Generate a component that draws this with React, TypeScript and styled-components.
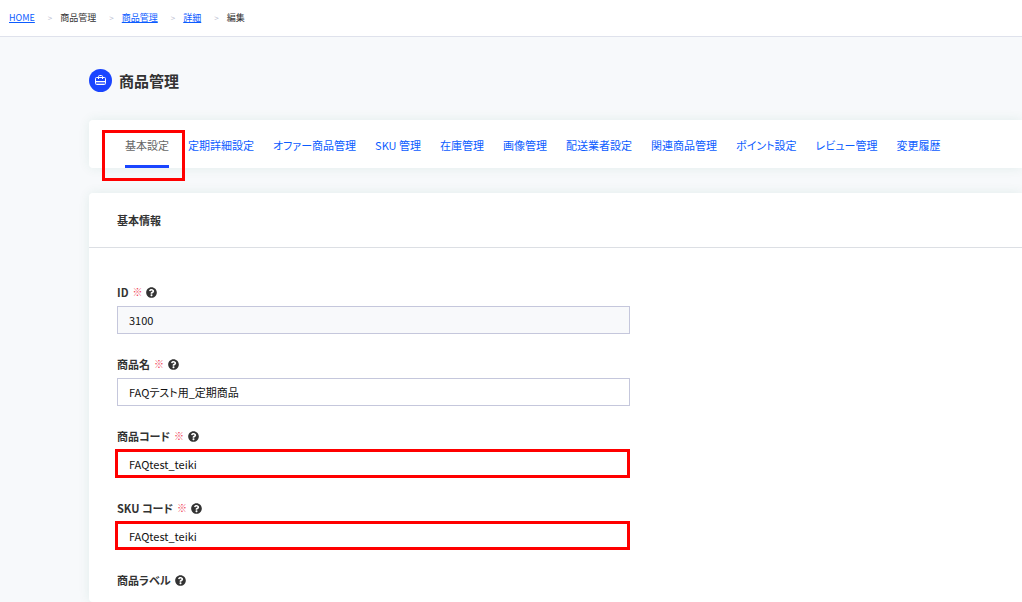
import React from "react";
import styled, { createGlobalStyle, css } from "styled-components";
import { FaQuestionCircle } from "react-icons/fa";

const GlobalStyle = createGlobalStyle`
  *, *::before, *::after { box-sizing: border-box; }
  html, body { margin: 0; padding: 0; }
  body {
    background: #f7f9fb;
    color: #333;
    font-family: "Noto Sans CJK JP", sans-serif;
    font-feature-settings: "palt";
    font-size: 11px;
    line-height: 16px;
    overflow-x: hidden;
  }
`;

const Page = styled.div`
  display: flex;
  flex-direction: column;
  min-height: 100vh;
`;

const Breadcrumb = styled.nav`
  background: #fff;
  border-bottom: 1px solid #dfe2ec;
  padding: 10px 9px;
`;

const Crumbs = styled.ol`
  display: flex;
  margin: 0;
  padding: 0;
  list-style: none;
  font-size: 9px;
  line-height: 16px;
`;

const Crumb = styled.li`
  & + &::before {
    content: ">";
    margin: 0 8px 0 13px;
    color: #b9bdd0;
    font-size: 8px;
  }
`;

const CrumbLink = styled.a`
  color: #0b5cff;
  text-decoration: underline;
`;

const Main = styled.main`
  display: flex;
  flex: 1;
  flex-direction: column;
  padding: 31px 0 0 89px;
`;

const Heading = styled.header`
  display: flex;
  align-items: center;
  gap: 7px;
  height: 24px;
  margin-bottom: 28px;
`;

const HeadingIcon = styled.span`
  display: flex;
  align-items: center;
  justify-content: center;
  width: 23px;
  height: 23px;
  border-radius: 50%;
  background: #1a45ff;
`;

const Title = styled.h1`
  margin: 0;
  padding-top: 2px;
  font-size: 15px;
  line-height: 24px;
  font-weight: 700;
`;

const card = css`
  background: #fff;
  border-radius: 4px 0 0 4px;
  box-shadow: 0 0 12px rgba(0, 110, 80, 0.09);
`;

const Tabs = styled.nav`
  ${card}
  display: flex;
  gap: 19px;
  height: 48px;
  margin-bottom: 25px;
  padding-left: 36px;
  white-space: nowrap;
`;

const Tab = styled.a<{ $active?: boolean }>`
  position: relative;
  padding-top: 17px;
  color: ${(p) => (p.$active ? "#666" : "#0b5cff")};
  text-decoration: none;
  border-bottom: 3px solid ${(p) => (p.$active ? "#1a45ff" : "transparent")};
`;

const Marker = styled.span<{ $inset: string }>`
  position: absolute;
  inset: ${(p) => p.$inset};
  border: 3px solid #f00;
  pointer-events: none;
`;

const Panel = styled.section`
  ${card}
  flex: 1;
`;

const PanelTitle = styled.h2`
  margin: 0;
  padding: 19px 28px;
  border-bottom: 1px solid #dcdfe4;
  font-size: 11px;
  line-height: 16px;
  font-weight: 700;
`;

const Form = styled.form`
  display: flex;
  flex-direction: column;
  gap: 22px;
  max-width: 569px;
  padding: 36px 28px 13px;
`;

const Field = styled.div`
  display: flex;
  flex-direction: column;
  gap: 6px;
`;

const LabelRow = styled.div`
  display: flex;
  align-items: center;
  gap: 4px;
  height: 16px;
`;

const Label = styled.label`
  font-weight: 700;
`;

const Required = styled.span`
  color: #f0465a;
  font-size: 10px;
`;

const HelpButton = styled.button`
  display: flex;
  padding: 0;
  border: 0;
  background: none;
  color: #333;
  font-size: 11px;
`;

const InputWrap = styled.div`
  position: relative;
  display: flex;
`;

const Input = styled.input`
  width: 100%;
  height: 28px;
  padding: 0 11px;
  border: 1px solid #c5c7dc;
  border-radius: 0;
  background: #fff;
  color: #111;
  font: inherit;
  font-feature-settings: inherit;
  outline: none;

  &:read-only {
    background: #f8f9fb;
  }
`;

const crumbs = [
  { text: "HOME", link: true },
  { text: "商品管理" },
  { text: "商品管理", link: true },
  { text: "詳細", link: true },
  { text: "編集" },
];

const tabs = [
  "基本設定",
  "定期詳細設定",
  "オファー商品管理",
  "SKU 管理",
  "在庫管理",
  "画像管理",
  "配送業者設定",
  "関連商品管理",
  "ポイント設定",
  "レビュー管理",
  "変更履歴",
];

interface FieldData {
  id: string;
  label: string;
  value?: string;
  required?: boolean;
  readOnly?: boolean;
  marked?: boolean;
}

const fields: FieldData[] = [
  { id: "product-id", label: "ID", value: "3100", required: true, readOnly: true },
  { id: "product-name", label: "商品名", value: "FAQテスト用_定期商品", required: true },
  { id: "product-code", label: "商品コード", value: "FAQtest_teiki", required: true, marked: true },
  { id: "sku-code", label: "SKU コード", value: "FAQtest_teiki", required: true, marked: true },
  { id: "product-label", label: "商品ラベル" },
];

function BagIcon() {
  return (
    <svg width="13" height="13" viewBox="0 0 13 13" fill="none" stroke="#fff" aria-hidden="true">
      <path d="M2 8H11V10H2Z" fill="#fff" fillOpacity="0.3" stroke="none" />
      <rect x="1.5" y="3.5" width="10" height="7" rx="1" />
      <path d="M4.5 5V2.6Q4.5 1.5 5.5 1.5H7.5Q8.5 1.5 8.5 2.6V5M1.5 7.5H11.5" />
    </svg>
  );
}

function FormField({ id, label, value, required, readOnly, marked }: FieldData) {
  return (
    <Field>
      <LabelRow>
        <Label htmlFor={value === undefined ? undefined : id}>{label}</Label>
        {required && <Required>※</Required>}
        <HelpButton type="button" aria-label={`${label}のヘルプ`}>
          <FaQuestionCircle />
        </HelpButton>
      </LabelRow>
      {value !== undefined && (
        <InputWrap>
          <Input id={id} type="text" defaultValue={value} readOnly={readOnly} />
          {marked && <Marker $inset="-1px 0 0 -2px" />}
        </InputWrap>
      )}
    </Field>
  );
}

export default function App() {
  return (
    <Page>
      <GlobalStyle />
      <Breadcrumb>
        <Crumbs>
          {crumbs.map((c, i) => (
            <Crumb key={i}>{c.link ? <CrumbLink href="#">{c.text}</CrumbLink> : c.text}</Crumb>
          ))}
        </Crumbs>
      </Breadcrumb>
      <Main>
        <Heading>
          <HeadingIcon>
            <BagIcon />
          </HeadingIcon>
          <Title>商品管理</Title>
        </Heading>
        <Tabs>
          {tabs.map((t, i) => (
            <Tab key={t} href="#" $active={i === 0}>
              {t}
              {i === 0 && <Marker $inset="10px -16px -16px -23px" />}
            </Tab>
          ))}
        </Tabs>
        <Panel>
          <PanelTitle>基本情報</PanelTitle>
          <Form>
            {fields.map((f) => (
              <FormField key={f.id} {...f} />
            ))}
          </Form>
        </Panel>
      </Main>
    </Page>
  );
}
